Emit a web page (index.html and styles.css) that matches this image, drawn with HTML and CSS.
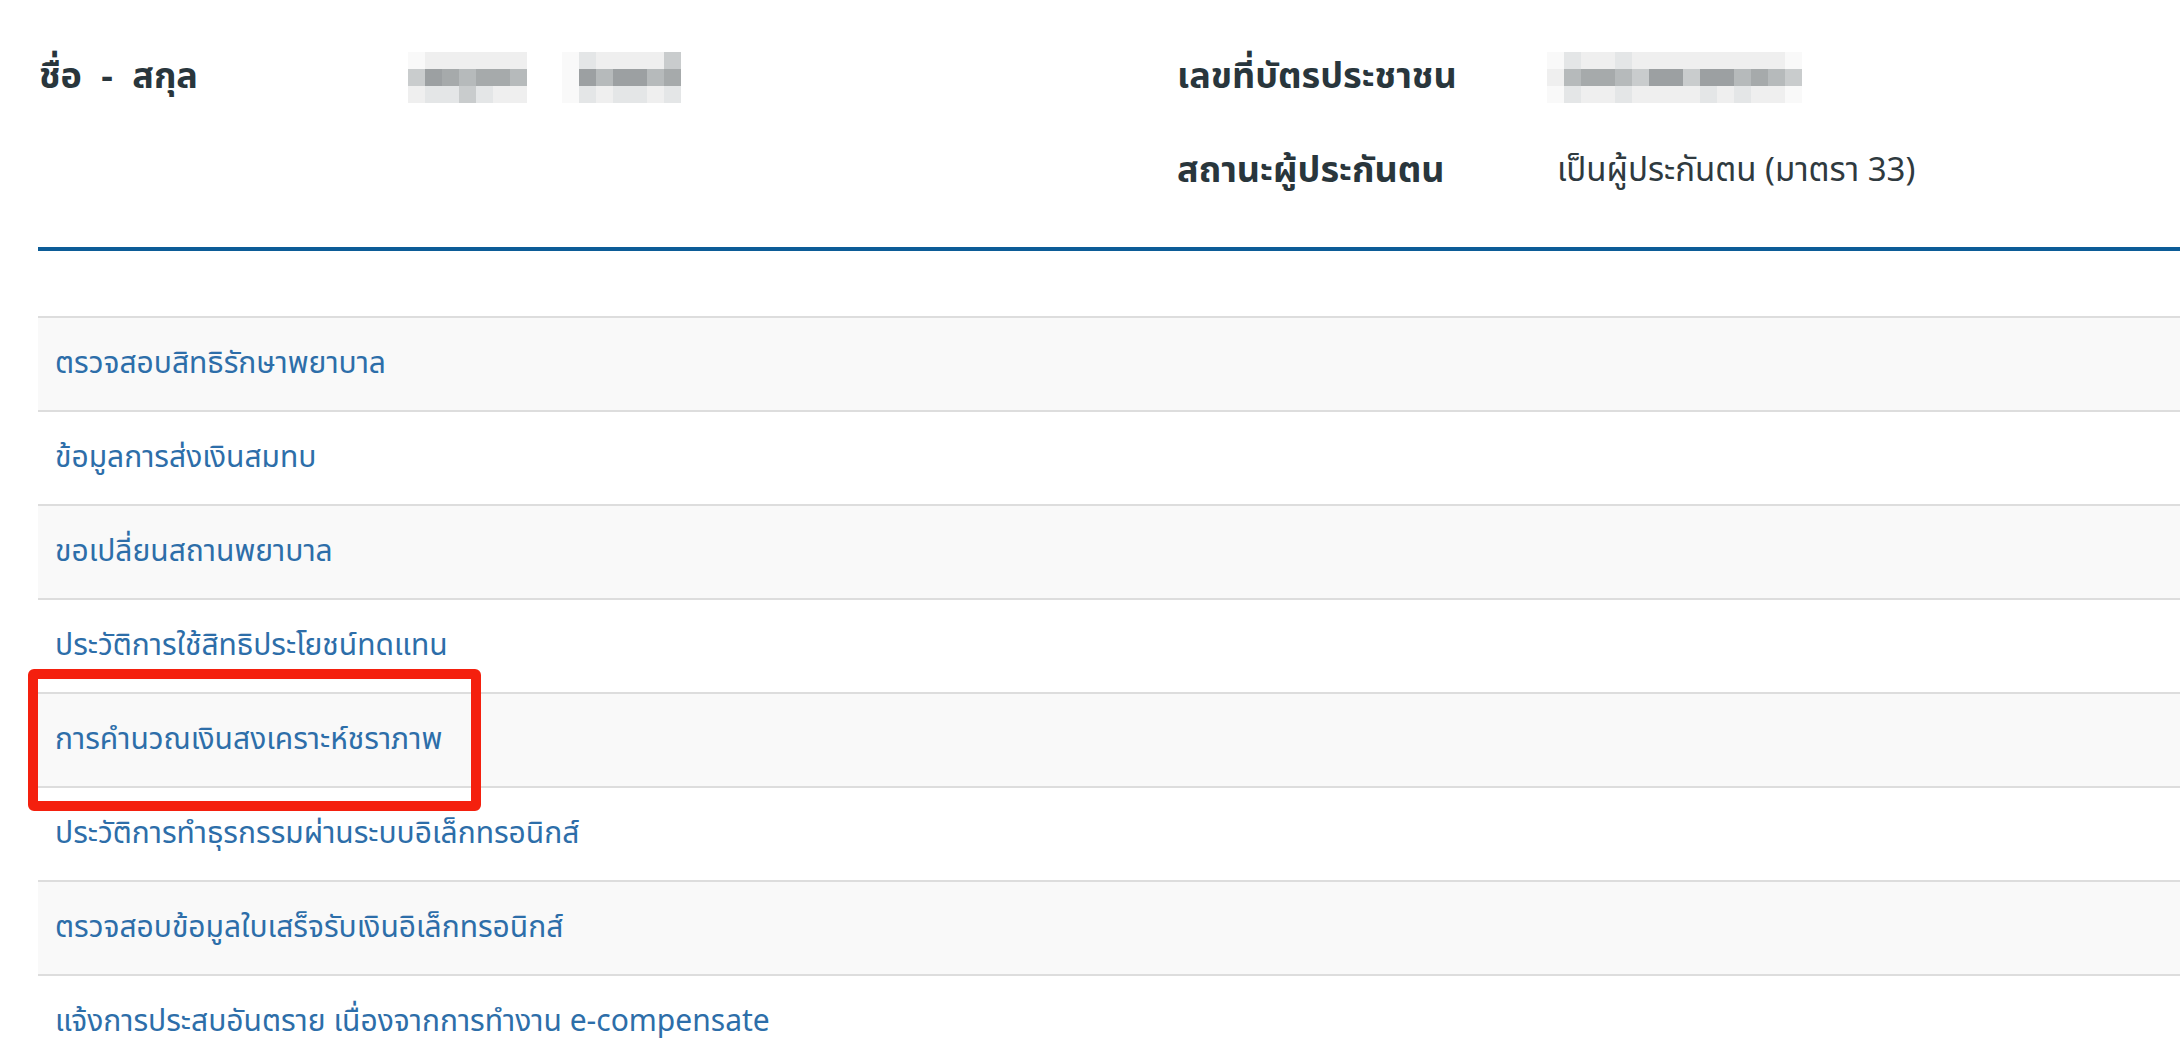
FILE: index.html
```html
<!DOCTYPE html>
<html lang="th">
<head>
<meta charset="utf-8">
<title>ข้อมูลผู้ประกันตน</title>
<link rel="stylesheet" href="styles.css">
</head>
<body>
<div class="page">
  <div class="info">
    <div class="label name-label">ชื่อ - สกุล</div>
    <div class="value">
      <div class="mosaic name1">
        <span class="s0"></span><span class="s1"></span><span class="s1"></span><span class="s1"></span><span class="s1"></span><span class="s1"></span><span class="s1"></span>
        <span class="s3"></span><span class="s6"></span><span class="s5"></span><span class="s4"></span><span class="s5"></span><span class="s5"></span><span class="s4"></span>
        <span class="s1"></span><span class="s2"></span><span class="s2"></span><span class="s3"></span><span class="s2"></span><span class="s1"></span><span class="s1"></span>
      </div>
      <div class="mosaic name2">
        <span class="s0"></span><span class="s2"></span><span class="s1"></span><span class="s1"></span><span class="s1"></span><span class="s1"></span><span class="s3"></span>
        <span class="s0"></span><span class="s6"></span><span class="s4"></span><span class="s6"></span><span class="s6"></span><span class="s4"></span><span class="s5"></span>
        <span class="s0"></span><span class="s2"></span><span class="s1"></span><span class="s2"></span><span class="s2"></span><span class="s1"></span><span class="s2"></span>
      </div>
    </div>
    <div class="label">เลขที่บัตรประชาชน</div>
    <div class="value">
      <div class="mosaic idno">
        <span class="s0"></span><span class="s2"></span><span class="s1"></span><span class="s1"></span><span class="s2"></span><span class="s1"></span><span class="s1"></span><span class="s1"></span><span class="s1"></span><span class="s1"></span><span class="s1"></span><span class="s1"></span><span class="s1"></span><span class="s1"></span><span class="s0"></span>
        <span class="s1"></span><span class="s4"></span><span class="s5"></span><span class="s5"></span><span class="s4"></span><span class="s3"></span><span class="s6"></span><span class="s6"></span><span class="s3"></span><span class="s6"></span><span class="s6"></span><span class="s4"></span><span class="s5"></span><span class="s4"></span><span class="s3"></span>
        <span class="s0"></span><span class="s2"></span><span class="s1"></span><span class="s1"></span><span class="s2"></span><span class="s1"></span><span class="s1"></span><span class="s1"></span><span class="s1"></span><span class="s2"></span><span class="s1"></span><span class="s2"></span><span class="s1"></span><span class="s1"></span><span class="s0"></span>
      </div>
    </div>
    <div class="label empty"></div>
    <div class="value"></div>
    <div class="label">สถานะผู้ประกันตน</div>
    <div class="value status">เป็นผู้ประกันตน (มาตรา 33)</div>
  </div>

  <div class="divider"></div>

  <div class="menu-wrap">
    <table class="menu">
      <tbody>
        <tr><td><a href="#">ตรวจสอบสิทธิรักษาพยาบาล</a></td></tr>
        <tr><td><a href="#">ข้อมูลการส่งเงินสมทบ</a></td></tr>
        <tr><td><a href="#">ขอเปลี่ยนสถานพยาบาล</a></td></tr>
        <tr><td><a href="#">ประวัติการใช้สิทธิประโยชน์ทดแทน</a></td></tr>
        <tr><td><a href="#">การคำนวณเงินสงเคราะห์ชราภาพ</a></td></tr>
        <tr><td><a href="#">ประวัติการทำธุรกรรมผ่านระบบอิเล็กทรอนิกส์</a></td></tr>
        <tr><td><a href="#">ตรวจสอบข้อมูลใบเสร็จรับเงินอิเล็กทรอนิกส์</a></td></tr>
        <tr><td><a href="#">แจ้งการประสบอันตราย เนื่องจากการทำงาน e-compensate</a></td></tr>
      </tbody>
    </table>
    <div class="highlight"></div>
  </div>
</div>
</body>
</html>
```

FILE: styles.css
```css
html, body {
  margin: 0;
  padding: 0;
  background: #ffffff;
  overflow: hidden;
}

body {
  font-family: "Noto Sans Thai", "Noto Sans Thai UI", "Noto Sans", "DejaVu Sans", sans-serif;
  color: #29363c;
}

.page {
  margin-left: 38px;
  padding-top: 30px;
}

.info {
  display: grid;
  grid-template-columns: 365px 774px 370px 1fr;
  grid-auto-rows: 94px;
  align-items: center;
}

.label {
  font-size: 36px;
  font-weight: 700;
  color: #29363c;
  white-space: nowrap;
}

.name-label {
  padding-left: 1px;
  word-spacing: 10px;
}

.value {
  display: flex;
  align-items: center;
  gap: 35px;
  padding-left: 5px;
}

.info > .value:nth-child(4) {
  padding-left: 0;
}

.status {
  font-size: 33px;
  font-weight: 400;
  color: #2f3a3f;
  padding-left: 10px;
  white-space: nowrap;
}

.mosaic {
  display: grid;
  grid-auto-rows: 17px;
}

.mosaic.name1,
.mosaic.name2 {
  grid-template-columns: repeat(7, 17px);
}

.mosaic.idno {
  grid-template-columns: repeat(15, 17px);
}

.mosaic span { display: block; }
.s0 { background: #f9f9f9; }
.s1 { background: #efefef; }
.s2 { background: #e4e6e7; }
.s3 { background: #c9cccd; }
.s4 { background: #b6babb; }
.s5 { background: #a6aaab; }
.s6 { background: #9ca0a2; }

.divider {
  height: 4px;
  background: #0c5c97;
  margin-top: 29px;
}

.menu-wrap {
  position: relative;
  margin-top: 65px;
}

.menu {
  width: 100%;
  border-collapse: collapse;
}

.menu td {
  border-top: 2px solid #dddddd;
  height: 92px;
  padding: 0 17px;
  font-size: 30px;
  vertical-align: middle;
}

.menu tr:nth-child(odd) td {
  background: #f9f9f9;
}

.menu a {
  color: #2d6ea9;
  text-decoration: none;
  white-space: nowrap;
}

.highlight {
  position: absolute;
  left: -10px;
  top: 353px;
  width: 433px;
  height: 122px;
  border: 10px solid #f4200e;
  border-radius: 6px;
  pointer-events: none;
}
```
